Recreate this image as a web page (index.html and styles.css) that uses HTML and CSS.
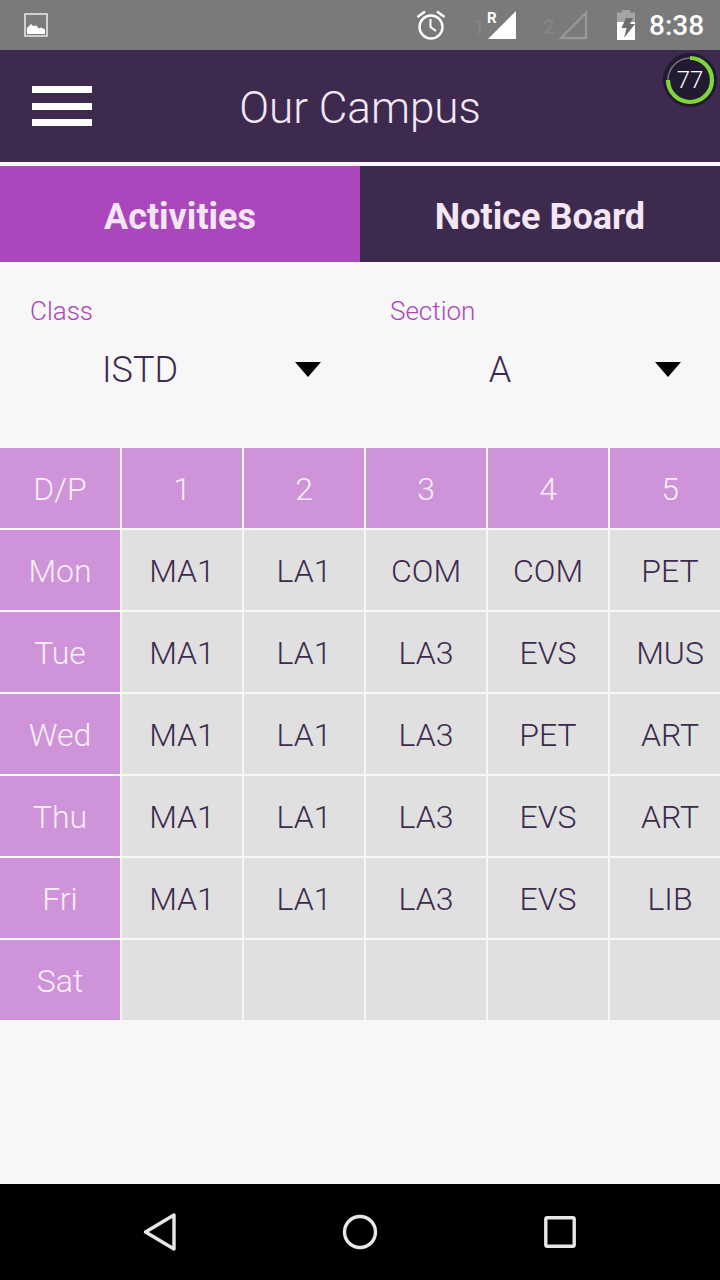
FILE: index.html
```html
<!DOCTYPE html>
<html lang="en">
<head>
<meta charset="utf-8">
<title>Our Campus</title>
<link rel="stylesheet" href="styles.css">
</head>
<body>
<div class="screen">
  <div class="status">
    <svg class="pic" width="24" height="24" viewBox="0 0 24 24"><rect x="1" y="1" width="22" height="22" fill="none" stroke="#e6e6e6" stroke-width="1.600"/><path d="M3 21v-6l4-4 2 2 3-.5 3 3 2-1 4 2v4.500z" fill="#fff"/></svg>
    <div class="status-right">
      <svg class="alarm" width="30" height="30" viewBox="0 0 30 30"><circle cx="15" cy="17" r="11.500" fill="none" stroke="#fff" stroke-width="2.400"/><path d="M14.500 9v8l5.500 4" fill="none" stroke="#fff" stroke-width="2"/><path d="M1.500 7L9 1.500M21 1.500L28.500 7" stroke="#fff" stroke-width="2.400"/></svg>
      <span class="sim sim1">1</span>
      <svg class="sig" width="30" height="30" viewBox="0 0 30 30"><path d="M1 29L29 1v28z" fill="#fff"/></svg>
      <span class="roam">R</span>
      <span class="sim sim2">2</span>
      <svg class="sig2" width="30" height="30" viewBox="0 0 30 30"><path d="M3 28L28 3v25z" fill="none" stroke="#989898" stroke-width="2.400"/></svg>
      <svg class="batt" width="20" height="30" viewBox="0 0 20 30"><path d="M6 0h8v2.500h5V12H1V2.500h5z" fill="#a4a4a4"/><path d="M1 12h18v18H1z" fill="#fff"/><path d="M10 8h7l-3 6h5L8 28l2.500-10H5.500z" fill="#6e6e6e"/></svg>
      <span class="clock">8:38</span>
    </div>
  </div>
  <header class="appbar">
    <div class="burger"><i></i><i></i><i></i></div>
    <h1 class="title">Our Campus</h1>
    <div class="badge">
      <svg width="56" height="56" viewBox="0 0 56 56"><circle cx="28" cy="28" r="27" fill="#211a30"/><circle cx="28" cy="28" r="22" fill="none" stroke="#77757f" stroke-width="1.500"/><path d="M28 6A22 22 0 1 1 6 28" fill="none" stroke="#7ed63c" stroke-width="4.200"/></svg>
      <span class="badge-num">77</span>
    </div>
  </header>
  <nav class="tabs">
    <div class="tab tab-active">Activities</div>
    <div class="tab">Notice Board</div>
  </nav>
  <section class="filters">
    <div class="field">
      <label class="field-label">Class</label>
      <div class="select"><span class="select-val">ISTD</span><span class="caret"></span></div>
    </div>
    <div class="field">
      <label class="field-label">Section</label>
      <div class="select"><span class="select-val">A</span><span class="caret"></span></div>
    </div>
  </section>
  <section class="grid">
    <div class="c h">D/P</div><div class="c h">1</div><div class="c h">2</div><div class="c h">3</div><div class="c h">4</div><div class="c h">5</div>
    <div class="c h">Mon</div><div class="c">MA1</div><div class="c">LA1</div><div class="c">COM</div><div class="c">COM</div><div class="c">PET</div>
    <div class="c h">Tue</div><div class="c">MA1</div><div class="c">LA1</div><div class="c">LA3</div><div class="c">EVS</div><div class="c">MUS</div>
    <div class="c h">Wed</div><div class="c">MA1</div><div class="c">LA1</div><div class="c">LA3</div><div class="c">PET</div><div class="c">ART</div>
    <div class="c h">Thu</div><div class="c">MA1</div><div class="c">LA1</div><div class="c">LA3</div><div class="c">EVS</div><div class="c">ART</div>
    <div class="c h">Fri</div><div class="c">MA1</div><div class="c">LA1</div><div class="c">LA3</div><div class="c">EVS</div><div class="c">LIB</div>
    <div class="c h">Sat</div><div class="c"></div><div class="c"></div><div class="c"></div><div class="c"></div><div class="c"></div>
  </section>
  <div class="spacer"></div>
  <footer class="navbar">
    <svg width="36" height="40" viewBox="0 0 36 40"><path d="M5.500 20L34 3v34z" fill="none" stroke="#e8e8e8" stroke-width="3.400" stroke-linejoin="round"/></svg>
    <svg width="36" height="36" viewBox="0 0 36 36"><circle cx="18" cy="18" r="15.500" fill="none" stroke="#e8e8e8" stroke-width="3.400"/></svg>
    <svg width="32" height="32" viewBox="0 0 32 32"><rect x="1.800" y="1.800" width="28.400" height="28.400" rx="1.500" fill="none" stroke="#e8e8e8" stroke-width="3.400"/></svg>
  </footer>
</div>
</body>
</html>
```
FILE: styles.css
```css
* { box-sizing: border-box; }
html, body { margin: 0; padding: 0; }
body { font-family: Roboto, "Liberation Sans", sans-serif; background: #f7f7f7; }
.screen { width: 720px; height: 1280px; display: flex; flex-direction: column; overflow: hidden; position: relative; }

.status { height: 50px; flex: none; background: #7a7a7a; display: flex; align-items: center; justify-content: space-between; padding-left: 24px; }
.pic { display: block; margin-top: -1px; }
.status-right { position: relative; display: flex; align-items: center; height: 50px; width: 320px; }
.alarm { position: absolute; left: 16px; top: 10px; }
.sim { position: absolute; top: 15px; font-size: 20px; font-weight: 700; color: #848484; }
.sim1 { left: 73px; }
.sim2 { left: 143px; }
.sig { position: absolute; left: 87px; top: 10px; }
.roam { position: absolute; left: 87px; top: 9px; font-size: 15px; font-weight: 700; color: #fff; }
.sig2 { position: absolute; left: 158px; top: 10px; }
.batt { position: absolute; left: 216px; top: 10px; }
.clock { position: absolute; left: 249px; top: 9px; font-size: 28px; font-weight: 500; color: #fff; line-height: 34px; }

.appbar { height: 112px; flex: none; background: #3d2a4e; position: relative; display: flex; align-items: center; justify-content: center; }
.burger { position: absolute; left: 32px; top: 36px; width: 60px; height: 40px; display: flex; flex-direction: column; justify-content: space-between; }
.burger i { display: block; height: 7px; background: #fff; }
.title { margin: 0; font-size: 44px; font-weight: 300; color: #f3e7f6; line-height: 50px; position: relative; top: 2px; }
.badge { position: absolute; left: 662px; top: 2px; width: 56px; height: 56px; }
.badge svg { display: block; }
.badge-num { position: absolute; inset: 0; display: flex; align-items: center; justify-content: center; font-size: 24px; font-weight: 300; color: #fff; }

.tabs { margin-top: 4px; height: 96px; flex: none; display: flex; background: #3d2a4e; }
.tab { width: 360px; display: flex; align-items: center; justify-content: center; font-size: 36px; font-weight: 700; color: #f3e7f6; padding-top: 5px; }
.tab-active { background: #ab47bc; }

.filters { height: 186px; flex: none; display: flex; }
.field { width: 360px; padding: 32px 0 0 30px; }
.field-label { display: block; font-size: 26px; font-weight: 300; color: #ab47bc; line-height: 34px; }
.select { display: flex; align-items: center; height: 50px; margin-top: 17px; position: relative; width: 300px; }
.select-val { width: 220px; text-align: center; font-size: 36px; font-weight: 300; color: #3d2a4e; }
.caret { position: absolute; left: 265px; top: 17px; width: 0; height: 0; border-left: 13px solid transparent; border-right: 13px solid transparent; border-top: 15px solid #000; }

.grid { display: grid; grid-template-columns: repeat(6, 120px); grid-auto-rows: 80px; gap: 2px; height: 572px; flex: none; overflow: hidden; }
.c { background: #e0e0e0; display: flex; align-items: center; justify-content: center; font-size: 32px; font-weight: 300; color: #3d2a4e; padding-top: 2px; }
.h { background: #ce93d8; color: #f7f0f8; }

.spacer { flex: 1; }
.navbar { height: 96px; flex: none; background: #000; position: relative; display: flex; align-items: center; justify-content: space-between; padding: 0 144px 0 140px; }
```
